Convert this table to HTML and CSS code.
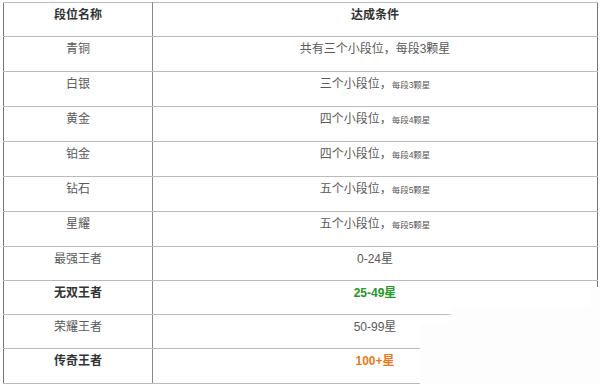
FILE: index.html
```html
<!DOCTYPE html>
<html lang="zh">
<head>
<meta charset="utf-8">
<link rel="stylesheet" href="styles.css">
</head>
<body>
<div class="wrap">
  <table class="rank">
    <tr class="head"><th>段位名称</th><th>达成条件</th></tr>
    <tr><td>青铜</td><td>共有三个小段位，每段3颗星</td></tr>
    <tr><td>白银</td><td>三个小段位，<span class="small">每段3颗星</span></td></tr>
    <tr><td>黄金</td><td>四个小段位，<span class="small">每段4颗星</span></td></tr>
    <tr><td>铂金</td><td>四个小段位，<span class="small">每段4颗星</span></td></tr>
    <tr><td>钻石</td><td>五个小段位，<span class="small">每段5颗星</span></td></tr>
    <tr><td>星耀</td><td>五个小段位，<span class="small">每段5颗星</span></td></tr>
    <tr class="short"><td>最强王者</td><td>0-24星</td></tr>
    <tr class="short"><td class="strong">无双王者</td><td class="green">25-49星</td></tr>
    <tr class="short"><td>荣耀王者</td><td>50-99星</td></tr>
    <tr><td class="strong">传奇王者</td><td class="orange">100+星</td></tr>
  </table>
  <div class="mark mark-a"></div>
  <div class="mark mark-b"></div>
  <div class="mark mark-c"></div>
</div>
</body>
</html>
```
FILE: styles.css
```css
html, body {
  margin: 0;
  padding: 0;
  background: #fff;
}
.wrap {
  position: relative;
  width: 600px;
  height: 385px;
  overflow: hidden;
  padding: 2px 0 0 3px;
  box-sizing: border-box;
}
.rank {
  border-collapse: collapse;
  width: 595px;
  font-family: "Liberation Sans", "Noto Sans CJK SC", sans-serif;
  font-size: 12px;
  color: #5a5a5a;
  border: 1px solid #777;
}
.rank th, .rank td {
  height: 35px;
  padding: 3px 0 0;
  box-sizing: border-box;
  vertical-align: top;
  text-align: center;
  line-height: 18px;
  border-top: 1px solid #bbb;
  border-bottom: 1px solid #bbb;
}
.rank th:first-child, .rank td:first-child {
  width: 149px;
  border-right: 1px solid #888;
}
.rank tr.short td {
  height: 34px;
}
.rank th {
  color: #333;
  font-weight: bold;
  height: 34px;
}
.small {
  font-size: 8.5px;
}
.strong {
  font-weight: bold;
  color: #333;
}
.green {
  color: #1f9a26;
  font-weight: bold;
}
.orange {
  color: #ec7a1c;
  font-weight: bold;
}
.mark {
  position: absolute;
  background: #fdfdfd;
}
.mark-a {
  left: 450px;
  top: 307px;
  right: 0;
  bottom: 0;
  border-radius: 6px 0 0 0;
  filter: blur(2px);
}
.mark-b {
  left: 420px;
  top: 325px;
  right: 0;
  bottom: 0;
}
.mark-c {
  left: 590px;
  top: 287px;
  right: 0;
  bottom: 0;
}
```
